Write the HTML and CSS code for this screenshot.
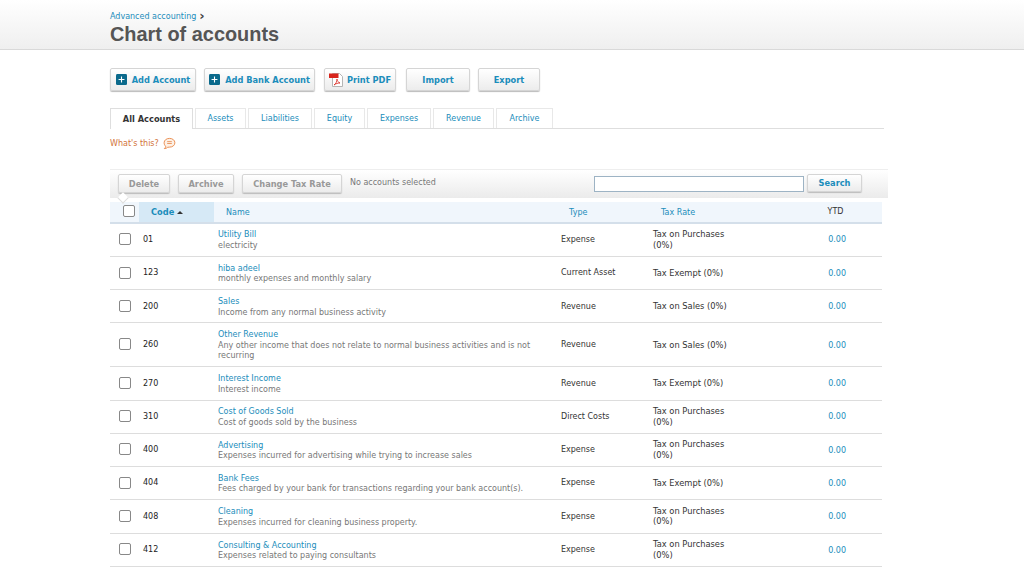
FILE: index.html
```html
<!DOCTYPE html>
<html lang="en">
<head>
<meta charset="utf-8">
<title>Chart of accounts</title>
<link rel="stylesheet" href="styles.css">
</head>
<body>
<header class="page-head">
  <div class="crumb"><a>Advanced accounting</a><span class="crumb-arrow">›</span></div>
  <h1>Chart of accounts</h1>
</header>
<main class="content">
  <div class="actions">
    <button class="btn btn-w1"><svg class="ico" viewBox="0 0 12 12"><rect width="12" height="12" rx="1.5" fill="#0b6a8c"/><path d="M6 2.8v6.4M2.8 6h6.4" stroke="#fff" stroke-width="1.2"/></svg>Add Account</button>
    <button class="btn btn-w2"><svg class="ico" viewBox="0 0 12 12"><rect width="12" height="12" rx="1.5" fill="#0b6a8c"/><path d="M6 2.8v6.4M2.8 6h6.4" stroke="#fff" stroke-width="1.2"/></svg>Add Bank Account</button>
    <button class="btn btn-w3"><svg class="ico pdf" viewBox="0 0 14 14"><path d="M3.500.5h7l3 3v10h-10z" fill="#fff" stroke="#b5b5b5"/><rect y=".5" width="9.500" height="4.500" fill="#d8241c"/><path d="M5 12c2-1 3-4 3-6 0 2 1 3 3 4-2 0-4 .5-6 2z" fill="none" stroke="#d8241c" stroke-width=".8"/></svg>Print PDF</button>
    <button class="btn btn-w4">Import</button>
    <button class="btn btn-w5">Export</button>
  </div>
  <nav class="tabs">
    <a class="tab active t1">All Accounts</a>
    <a class="tab t2">Assets</a>
    <a class="tab t3">Liabilities</a>
    <a class="tab t4">Equity</a>
    <a class="tab t5">Expenses</a>
    <a class="tab t6">Revenue</a>
    <a class="tab t7">Archive</a>
  </nav>
  <div class="whats"><a>What's this?</a><svg class="bubble" viewBox="0 0 14 13"><path d="M7 1c3.200 0 5.800 1.900 5.800 4.700S10.200 10.400 7 10.400c-.8 0-1.300 0-2 .2-.8.8-2 1.400-3.600 1.400 1-.8 1.500-1.600 1.500-2.600C1.900 8.600 1.200 7.300 1.200 5.700 1.200 2.900 3.800 1 7 1z" fill="#fdf1e6" stroke="#e8884a"/><path d="M4.500 4.500h5M4.500 6.500h5" stroke="#e8884a" stroke-width=".9"/></svg></div>
  <div class="toolbar">
    <button class="btn tb-btn b-del">Delete</button>
    <button class="btn tb-btn b-arc">Archive</button>
    <button class="btn tb-btn b-tax">Change Tax Rate</button>
    <span class="none">No accounts selected</span>
    <span class="spacer"></span>
    <input class="search" type="text" aria-label="Search">
    <button class="btn search-btn">Search</button>
  </div>
  <table class="accounts">
    <colgroup><col class="c-check"><col class="c-code"><col class="c-name"><col class="c-type"><col class="c-tax"><col class="c-ytd"></colgroup>
    <thead>
      <tr>
        <th class="th-check"><span class="box"></span></th>
        <th class="th-code">Code <span class="sort"></span></th>
        <th class="th-name">Name</th>
        <th class="th-type">Type</th>
        <th class="th-tax">Tax Rate</th>
        <th class="th-ytd">YTD</th>
      </tr>
    </thead>
    <tbody>
      <tr><td class="td-check"><span class="box"></span></td><td class="code">01</td><td class="name"><a>Utility Bill</a><div class="desc">electricity</div></td><td class="type">Expense</td><td class="tax">Tax on Purchases (0%)</td><td class="ytd"><a>0.00</a></td></tr>
      <tr><td class="td-check"><span class="box"></span></td><td class="code">123</td><td class="name"><a>hiba adeel</a><div class="desc">monthly expenses and monthly salary</div></td><td class="type">Current Asset</td><td class="tax">Tax Exempt (0%)</td><td class="ytd"><a>0.00</a></td></tr>
      <tr><td class="td-check"><span class="box"></span></td><td class="code">200</td><td class="name"><a>Sales</a><div class="desc">Income from any normal business activity</div></td><td class="type">Revenue</td><td class="tax">Tax on Sales (0%)</td><td class="ytd"><a>0.00</a></td></tr>
      <tr><td class="td-check"><span class="box"></span></td><td class="code">260</td><td class="name"><a>Other Revenue</a><div class="desc">Any other income that does not relate to normal business activities and is not recurring</div></td><td class="type">Revenue</td><td class="tax">Tax on Sales (0%)</td><td class="ytd"><a>0.00</a></td></tr>
      <tr><td class="td-check"><span class="box"></span></td><td class="code">270</td><td class="name"><a>Interest Income</a><div class="desc">Interest income</div></td><td class="type">Revenue</td><td class="tax">Tax Exempt (0%)</td><td class="ytd"><a>0.00</a></td></tr>
      <tr><td class="td-check"><span class="box"></span></td><td class="code">310</td><td class="name"><a>Cost of Goods Sold</a><div class="desc">Cost of goods sold by the business</div></td><td class="type">Direct Costs</td><td class="tax">Tax on Purchases (0%)</td><td class="ytd"><a>0.00</a></td></tr>
      <tr><td class="td-check"><span class="box"></span></td><td class="code">400</td><td class="name"><a>Advertising</a><div class="desc">Expenses incurred for advertising while trying to increase sales</div></td><td class="type">Expense</td><td class="tax">Tax on Purchases (0%)</td><td class="ytd"><a>0.00</a></td></tr>
      <tr><td class="td-check"><span class="box"></span></td><td class="code">404</td><td class="name"><a>Bank Fees</a><div class="desc">Fees charged by your bank for transactions regarding your bank account(s).</div></td><td class="type">Expense</td><td class="tax">Tax Exempt (0%)</td><td class="ytd"><a>0.00</a></td></tr>
      <tr><td class="td-check"><span class="box"></span></td><td class="code">408</td><td class="name"><a>Cleaning</a><div class="desc">Expenses incurred for cleaning business property.</div></td><td class="type">Expense</td><td class="tax">Tax on Purchases (0%)</td><td class="ytd"><a>0.00</a></td></tr>
      <tr><td class="td-check"><span class="box"></span></td><td class="code">412</td><td class="name"><a>Consulting &amp; Accounting</a><div class="desc">Expenses related to paying consultants</div></td><td class="type">Expense</td><td class="tax">Tax on Purchases (0%)</td><td class="ytd"><a>0.00</a></td></tr>
    </tbody>
  </table>
</main>
</body>
</html>
```
FILE: styles.css
```css
* { box-sizing: border-box; }
html, body { height: 569px; overflow: hidden; }
body { margin: 0; background: #fff; font-family: "DejaVu Sans", sans-serif; font-size: 8px; color: #333; }
a { color: #1b8dbb; }
.page-head { height: 50px; padding: 11px 0 0 110px; background: linear-gradient(#fff, #efefef); border-bottom: 1px solid #d9d9d9; }
.crumb { height: 12px; line-height: 12px; display: flex; gap: 3px; }
.crumb-arrow { font-weight: bold; font-size: 13px; color: #444; line-height: 10px; }
h1 { margin: 0; font: bold 19.9px/22px "Liberation Sans", sans-serif; color: #555; }
.content { width: 778px; margin-left: 110px; }
.actions { display: flex; margin-top: 18px; height: 24px; }
.btn { height: 23px; padding: 0; border: 1px solid #d5d5d5; border-radius: 2px; background: linear-gradient(#fff, #ececec); box-shadow: 0 1px 1px #bbb; font-family: "DejaVu Sans", sans-serif; font-weight: bold; font-size: 8.25px; color: #1b8dbb; display: flex; align-items: center; justify-content: center; }
.btn-w1 { width: 86px; margin-right: 8px; }
.btn-w2 { width: 111px; margin-right: 9px; }
.btn-w3 { width: 72px; margin-right: 10px; }
.btn-w4 { width: 64px; margin-right: 8px; }
.btn-w5 { width: 62px; }
.ico { width: 11px; height: 11px; margin-right: 5px; }
.ico.pdf { width: 14px; height: 14px; margin-right: 4px; }
.tabs { display: flex; margin-top: 16px; height: 21px; width: 774px; border-bottom: 1px solid #dedede; }
.tab { height: 20px; line-height: 20px; text-align: center; border: 1px solid #e8e8e8; border-bottom: 0; margin-right: 2px; background: #fff; }
.tab.active { height: 21px; border-color: #dedede; color: #333; font-weight: bold; font-size: 8.25px; position: relative; }
.t1 { width: 83px; } .t2 { width: 51px; } .t3 { width: 64px; } .t4 { width: 51px; } .t5 { width: 64px; } .t6 { width: 61px; } .t7 { width: 57px; }
.whats { display: flex; align-items: center; gap: 4px; margin-top: 8px; height: 13px; }
.whats a { color: #d2733a; }
.bubble { width: 13px; height: 13px; }
.toolbar { display: flex; align-items: flex-start; margin-top: 19px; height: 29px; padding: 4px 0 0 8px; background: linear-gradient(#fff, #ebebeb); border-top: 1px solid #eee; position: relative; }
.toolbar::after { content: ""; position: absolute; left: 9px; bottom: -4px; width: 7px; height: 7px; background: #fff; border-right: 1px solid #ddd; border-bottom: 1px solid #ddd; transform: rotate(45deg); }
.tb-btn { height: 19px; color: #999; }
.b-del { width: 52px; margin-right: 8px; }
.b-arc { width: 56px; margin-right: 8px; }
.b-tax { width: 100px; margin-right: 8px; }
.none { color: #777; line-height: 10px; margin-top: 4px; }
.spacer { flex: 1; }
.search { width: 210px; height: 16px; margin: 2px 3px 0 0; padding: 0; border: 1px solid #9db3c4; background: #fff; }
.search-btn { width: 55px; height: 18px; margin-right: 26px; padding-bottom: 1px; }
.accounts { width: 772px; margin-top: 4px; border-collapse: collapse; table-layout: fixed; }
.c-check { width: 29px; } .c-code { width: 75px; } .c-name { width: 343px; } .c-type { width: 92px; } .c-tax { width: 130px; } .c-ytd { width: 103px; }
th { height: 20.6px; background: #f0f6fc; border-bottom: 2px solid #d4dfea; font-weight: normal; text-align: left; color: #1b8dbb; padding: 1px 0 0; }
th.th-code { background: #d6e9f6; font-weight: bold; padding: 0 0 0 12px; font-size: 8.25px; }
th.th-name { padding-left: 12px; }
th.th-type { padding-left: 12px; }
th.th-tax { padding-left: 12px; }
th.th-ytd { color: #333; text-align: center; padding: 0 0 0 10px; }
th.th-check { padding: 0 0 1px 13px; }
.sort { display: inline-block; width: 0; height: 0; border: 3px solid transparent; border-bottom: 3px solid #333; border-top: 0; vertical-align: 1px; }
.box { display: block; width: 12px; height: 12px; border: 1px solid #888; border-radius: 2px; background: #fff; }
td { padding: 5.65px 0; border-bottom: 1px solid #ddd; vertical-align: middle; line-height: 10.5px; color: #333; }
.td-check { padding: 5.15px 0 6.15px 9px; }
.code { padding: 6.15px 0 5.15px 4px; color: #222; }
.name { padding: 6.9px 20px 4.4px 4px; }
.type { padding: 6.15px 0 5.15px 4px; }
.desc { color: #777; }
.tax { padding-left: 4px; padding-right: 40px; font-size: 8.3px; }
.ytd { text-align: right; padding: 6.65px 36px 4.65px 0; }
```
